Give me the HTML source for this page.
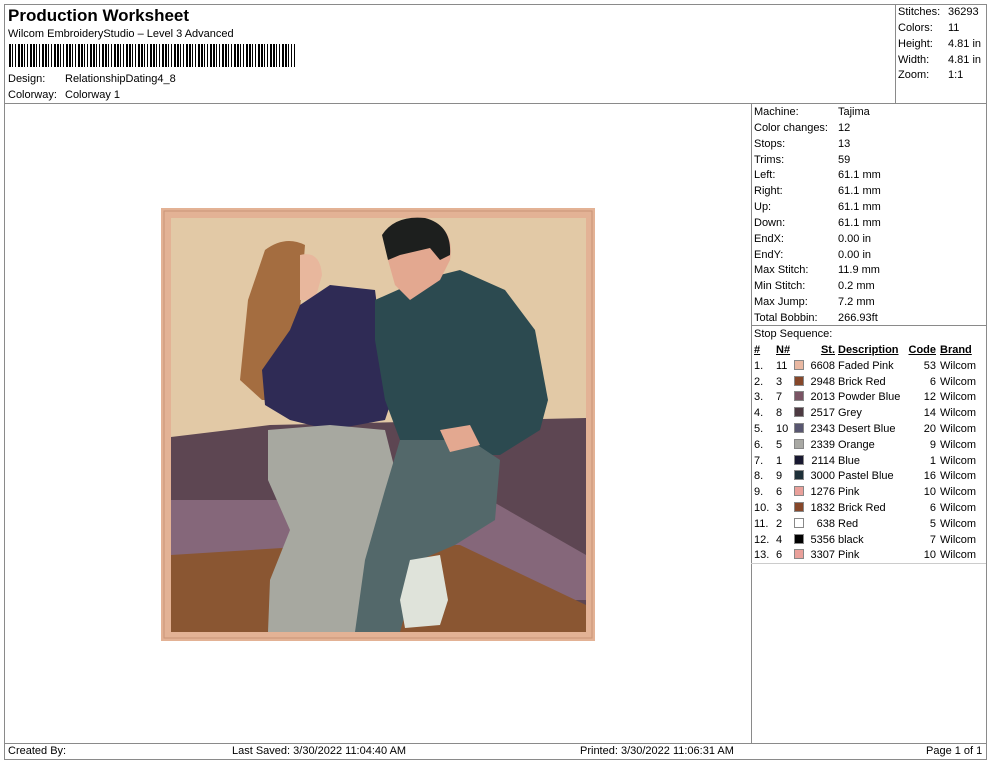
<!DOCTYPE html>
<html><head><meta charset="utf-8"><style>
*{margin:0;padding:0;box-sizing:border-box}
body{width:990px;height:762px;background:#fff;font-family:"Liberation Sans",Arial,sans-serif;font-size:11px;color:#000;position:relative;overflow:hidden}
.a{position:absolute;white-space:nowrap}
.ln{position:absolute;background:#8a8a8a}
.rows div{height:15.85px;line-height:15.85px}
table{border-collapse:collapse;font-size:11px}
td{height:15.8px;line-height:15.8px;padding:0;white-space:nowrap}
.sw{display:inline-block;width:10px;height:10px;vertical-align:-1px;border:1px solid #888}
</style></head><body>
<div class="ln" style="left:4px;top:4px;width:982px;height:1px"></div>
<div class="ln" style="left:4px;top:4px;width:1px;height:756px"></div>
<div class="ln" style="left:986px;top:4px;width:1px;height:756px"></div>
<div class="ln" style="left:4px;top:759px;width:983px;height:1px"></div>
<div class="ln" style="left:4px;top:103px;width:982px;height:1px"></div>
<div class="ln" style="left:895px;top:4px;width:1px;height:99px"></div>
<div class="ln" style="left:751px;top:103px;width:1px;height:640px"></div>
<div class="ln" style="left:751px;top:325px;width:235px;height:1px"></div>
<div class="ln" style="left:751px;top:563px;width:235px;height:1px;background:#ccc"></div>
<div class="ln" style="left:4px;top:743px;width:982px;height:1px"></div>

<div class="a" style="left:8px;top:6px;font-size:17px;font-weight:bold">Production Worksheet</div>
<div class="a" style="left:8px;top:28px">Wilcom EmbroideryStudio – Level 3 Advanced</div>
<div class="a" style="left:9px;top:44px;width:286px;height:23px;background:repeating-linear-gradient(90deg,#000 0 2px,#fff 2px 3px,#000 3px 4px,#fff 4px 6px,#000 6px 7px,#fff 7px 9px,#000 9px 11px,#fff 11px 12px)"></div>
<div class="a" style="left:8px;top:73px">Design:</div>
<div class="a" style="left:65px;top:73px">RelationshipDating4_8</div>
<div class="a" style="left:8px;top:89px">Colorway:</div>
<div class="a" style="left:65px;top:89px">Colorway 1</div>

<div class="a rows" style="left:898px;top:5px"><div>Stitches:</div><div>Colors:</div><div>Height:</div><div>Width:</div><div>Zoom:</div></div>
<div class="a rows" style="left:948px;top:5px"><div>36293</div><div>11</div><div>4.81 in</div><div>4.81 in</div><div>1:1</div></div>

<div class="a rows" style="left:754px;top:105px"><div>Machine:</div><div>Color changes:</div><div>Stops:</div><div>Trims:</div><div>Left:</div><div>Right:</div><div>Up:</div><div>Down:</div><div>EndX:</div><div>EndY:</div><div>Max Stitch:</div><div>Min Stitch:</div><div>Max Jump:</div><div>Total Bobbin:</div><div>Stop Sequence:</div></div>
<div class="a rows" style="left:838px;top:105px"><div>Tajima</div><div>12</div><div>13</div><div>59</div><div>61.1 mm</div><div>61.1 mm</div><div>61.1 mm</div><div>61.1 mm</div><div>0.00 in</div><div>0.00 in</div><div>11.9 mm</div><div>0.2 mm</div><div>7.2 mm</div><div>266.93ft</div></div>

<table class="a" style="left:754px;top:343px">
<tr style="font-weight:bold;text-decoration:underline"><td style="width:22px">#</td><td style="width:18px">N#</td><td style="width:13px"></td><td style="width:28px;text-align:right">St.</td><td style="width:72px;padding-left:3px">Description</td><td style="width:29px;text-align:right">Code</td><td style="padding-left:4px">Brand</td></tr>
<tr><td>1.</td><td>11</td><td><span class="sw" style="background:#e9b8a2"></span></td><td style="text-align:right">6608</td><td style="padding-left:3px">Faded Pink</td><td style="text-align:right">53</td><td style="padding-left:4px">Wilcom</td></tr>
<tr><td>2.</td><td>3</td><td><span class="sw" style="background:#86472a"></span></td><td style="text-align:right">2948</td><td style="padding-left:3px">Brick Red</td><td style="text-align:right">6</td><td style="padding-left:4px">Wilcom</td></tr>
<tr><td>3.</td><td>7</td><td><span class="sw" style="background:#7a5464"></span></td><td style="text-align:right">2013</td><td style="padding-left:3px">Powder Blue</td><td style="text-align:right">12</td><td style="padding-left:4px">Wilcom</td></tr>
<tr><td>4.</td><td>8</td><td><span class="sw" style="background:#4d3a42"></span></td><td style="text-align:right">2517</td><td style="padding-left:3px">Grey</td><td style="text-align:right">14</td><td style="padding-left:4px">Wilcom</td></tr>
<tr><td>5.</td><td>10</td><td><span class="sw" style="background:#585670"></span></td><td style="text-align:right">2343</td><td style="padding-left:3px">Desert Blue</td><td style="text-align:right">20</td><td style="padding-left:4px">Wilcom</td></tr>
<tr><td>6.</td><td>5</td><td><span class="sw" style="background:#a9a9a4"></span></td><td style="text-align:right">2339</td><td style="padding-left:3px">Orange</td><td style="text-align:right">9</td><td style="padding-left:4px">Wilcom</td></tr>
<tr><td>7.</td><td>1</td><td><span class="sw" style="background:#181830"></span></td><td style="text-align:right">2114</td><td style="padding-left:3px">Blue</td><td style="text-align:right">1</td><td style="padding-left:4px">Wilcom</td></tr>
<tr><td>8.</td><td>9</td><td><span class="sw" style="background:#1e3038"></span></td><td style="text-align:right">3000</td><td style="padding-left:3px">Pastel Blue</td><td style="text-align:right">16</td><td style="padding-left:4px">Wilcom</td></tr>
<tr><td>9.</td><td>6</td><td><span class="sw" style="background:#e9a09a"></span></td><td style="text-align:right">1276</td><td style="padding-left:3px">Pink</td><td style="text-align:right">10</td><td style="padding-left:4px">Wilcom</td></tr>
<tr><td>10.</td><td>3</td><td><span class="sw" style="background:#86472a"></span></td><td style="text-align:right">1832</td><td style="padding-left:3px">Brick Red</td><td style="text-align:right">6</td><td style="padding-left:4px">Wilcom</td></tr>
<tr><td>11.</td><td>2</td><td><span class="sw" style="background:#fff"></span></td><td style="text-align:right">638</td><td style="padding-left:3px">Red</td><td style="text-align:right">5</td><td style="padding-left:4px">Wilcom</td></tr>
<tr><td>12.</td><td>4</td><td><span class="sw" style="background:#000"></span></td><td style="text-align:right">5356</td><td style="padding-left:3px">black</td><td style="text-align:right">7</td><td style="padding-left:4px">Wilcom</td></tr>
<tr><td>13.</td><td>6</td><td><span class="sw" style="background:#e9a09a"></span></td><td style="text-align:right">3307</td><td style="padding-left:3px">Pink</td><td style="text-align:right">10</td><td style="padding-left:4px">Wilcom</td></tr>
</table>

<svg class="a" style="left:0;top:0" width="990" height="762" viewBox="0 0 990 762">
<rect x="161" y="208" width="434" height="433" fill="#e3b295"/>
<rect x="164" y="211" width="428" height="427" fill="none" stroke="#c99478" stroke-width="1"/>
<rect x="171" y="218" width="415" height="414" fill="#e2c9a6"/>
<polygon points="171,437 270,425 586,418 586,632 171,632" fill="#5d4652"/>
<polygon points="171,500 300,500 490,500 586,555 586,600 171,600" fill="#85677a"/>
<polygon points="171,555 330,545 460,545 586,605 586,632 171,632" fill="#8a5632"/>
<path d="M265,250 Q285,235 305,245 L300,310 L310,400 L262,400 L240,380 L248,300 Z" fill="#a46d40"/>
<path d="M300,255 Q320,250 322,275 L315,300 L300,300 Z" fill="#e8b79d"/>
<path d="M300,305 L330,285 L375,290 L380,330 L395,390 L385,420 L330,430 L290,420 L265,405 L262,370 L290,330 Z" fill="#2f2b55"/>
<path d="M268,430 L330,425 L385,430 L395,470 L380,632 L268,632 L270,580 L290,530 L268,480 Z" fill="#a7a8a0"/>
<path d="M375,300 L420,280 L460,270 L505,290 L535,330 L548,400 L540,430 L500,455 L450,455 L400,440 L385,400 L375,340 Z" fill="#2c4a50"/>
<path d="M385,235 Q400,215 430,220 Q455,230 450,260 L440,280 L410,300 L395,285 L388,260 Z" fill="#e3a890"/>
<path d="M382,235 Q395,215 425,218 Q452,225 450,255 L440,260 L430,248 L400,255 L388,260 Z" fill="#1d1f1e"/>
<path d="M400,440 L470,440 L500,460 L495,520 L455,545 L420,560 L400,632 L355,632 L365,560 L385,490 Z" fill="#53686a"/>
<path d="M410,560 L440,555 L448,600 L440,625 L405,628 L400,600 Z" fill="#dfe3da"/>
<path d="M440,430 L470,425 L480,445 L450,452 Z" fill="#e3a890"/>
</svg>

<div class="a" style="left:8px;top:745px">Created By:</div>
<div class="a" style="left:232px;top:745px">Last Saved: 3/30/2022 11:04:40 AM</div>
<div class="a" style="left:580px;top:745px">Printed: 3/30/2022 11:06:31 AM</div>
<div class="a" style="left:926px;top:745px">Page 1 of 1</div>
</body></html>
